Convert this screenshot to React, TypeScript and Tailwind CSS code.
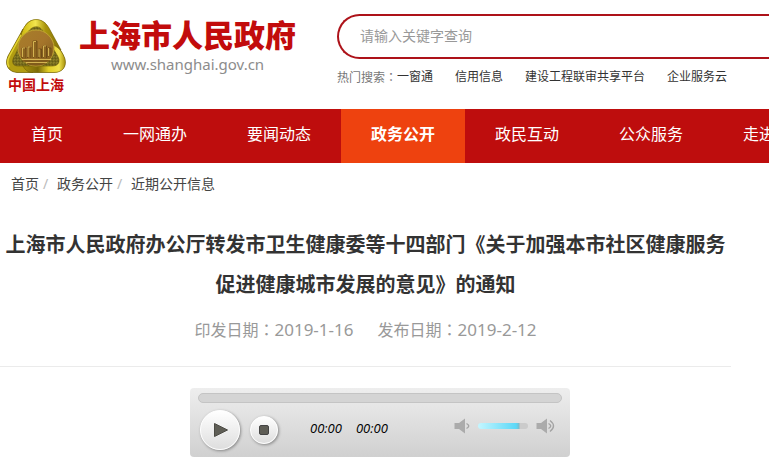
import { useState } from "react";

const navItems = [
  "首页",
  "一网通办",
  "要闻动态",
  "政务公开",
  "政民互动",
  "公众服务",
  "走进上海",
];

const hotSearches = ["一窗通", "信用信息", "建设工程联审共享平台", "企业服务云"];

const dates = [
  { label: "印发日期", value: "2019-1-16" },
  { label: "发布日期", value: "2019-2-12" },
];

const Emblem = () => (
  <svg viewBox="3 3 60 54" className="h-[54px] w-[60px]" aria-hidden="true">
    <defs>
      <linearGradient id="gold" x1="0" y1="0" x2="1" y2="0">
        <stop offset="0" stopColor="#9c8808" />
        <stop offset="0.3" stopColor="#d8c51c" />
        <stop offset="0.5" stopColor="#f2e54e" />
        <stop offset="0.7" stopColor="#a8930c" />
        <stop offset="1" stopColor="#84700a" />
      </linearGradient>
      <linearGradient id="goldBase" x1="0" y1="0" x2="1" y2="0">
        <stop offset="0" stopColor="#a8930e" />
        <stop offset="0.35" stopColor="#7d6a08" />
        <stop offset="0.6" stopColor="#e0cd26" />
        <stop offset="0.85" stopColor="#f0e14a" />
        <stop offset="1" stopColor="#a58f0c" />
      </linearGradient>
      <linearGradient id="bronze" x1="0" y1="0" x2="1" y2="1">
        <stop offset="0" stopColor="#a87e2a" />
        <stop offset="0.5" stopColor="#a5752b" />
        <stop offset="1" stopColor="#7f5c1c" />
      </linearGradient>
      <pattern id="grain" width="3" height="3" patternUnits="userSpaceOnUse">
        <rect width="3" height="3" fill="#756a1c" />
        <path d="M0 1H1M2 2H3" stroke="#a09436" strokeWidth="0.9" />
        <path d="M1 0V1" stroke="#4f480f" strokeWidth="0.9" />
      </pattern>
    </defs>
    <path
      d="M23 8C28 2 39 2 44 9L60 38C65 48 61 56 52 56.5H14C5 56 1 49 5 40Z"
      fill="#8d7a0c"
    />
    <path d="M22 16C28 5 39 6 43 14L56 35C60 45 57 51 48 52H18C8 52 6 46 9 39Z" fill="url(#grain)" />
    <path
      d="M16 23C20 10 26 3 34 3.5C39 4 43 7 46 12L58 34C55 31 52 30 49 30L40 15C35 7 27 11 23 19L7 44C8 36 12 31 16 23Z"
      fill="url(#gold)"
      stroke="#7b690a"
      strokeWidth="0.6"
    />
    <path
      d="M20 13L5 40C1 49 6 56 14 56.5H30C26 54 24 52 22 50H15C9 50 8 45 12 39L18 27C17 22 18 18 20 13Z"
      fill="#b29d12"
      stroke="#6c5b08"
      strokeWidth="0.6"
    />
    <path d="M18 19L7 39Q3 46 6 51" fill="none" stroke="#e3d332" strokeWidth="1.5" />
    <path
      d="M20 50H49C56 50 58 45 54 39L48 29C55 29 60 37 62 43C64 51 59 56.5 51 56.5H28C25 56 22 54 20 50Z"
      fill="url(#goldBase)"
      stroke="#6c5b08"
      strokeWidth="0.6"
    />
    <circle cx="33" cy="32" r="18" fill="url(#bronze)" stroke="#c0a431" strokeWidth="1" />
    <path d="M17 40A18 18 0 0 0 49 40L33 46Z" fill="#8e661f" />
    <path
      d="M19 42V32H23V42M24.5 42V31H28V42M30 42V25H34V42M35.5 42V33H38.5V42M40 42V30H43.5V42M45 41V32H48V40"
      fill="#8c6420"
      stroke="#604113"
      strokeWidth="0.7"
    />
    <path
      d="M19.5 41V32H22M25 41V31H27.5M30.5 41V25.5H33M36 41V33M40.5 41V30H43M45.5 40V32M19 43.5H48M23 46.5H44"
      fill="none"
      stroke="#dcbd58"
      strokeWidth="0.9"
    />
    <path d="M19 45H47M24 48H43" stroke="#6d4b15" strokeWidth="0.8" />
  </svg>
);

const Header = () => (
  <header className="flex h-[109px] items-start">
    <a href="#" className="flex w-[337px] shrink-0 pl-[5px] text-[#c20c0c]">
      <div className="flex w-[62px] flex-col items-center pt-[19px]">
        <Emblem />
        <span className="pt-0.5 text-sm leading-5 font-bold">中国上海</span>
      </div>
      <div className="flex flex-col items-center pt-[13px] pl-3">
        <span className="text-[31px] leading-[45px] font-black">上海市人民政府</span>
        <span className="text-[15px] leading-3 text-[#8c8c8c]">www.shanghai.gov.cn</span>
      </div>
    </a>
    <div className="min-w-0 flex-1 pt-3.5">
      <input
        type="search"
        aria-label="搜索"
        placeholder="请输入关键字查询"
        className="h-[45px] w-full rounded-l-full border-2 border-r-0 border-[#ad1219] pb-0.5 pl-[21px] text-sm outline-none placeholder:text-[#999]"
      />
      <div className="flex overflow-hidden pt-2 text-xs leading-5 whitespace-nowrap text-[#333]">
        <span className="text-[#777]">
          热门搜索<span className="font-['Noto_Sans_CJK_TC',sans-serif]">：</span>
        </span>
        <div className="flex gap-[22px]">
          {hotSearches.map((item) => (
            <a key={item} href="#">
              {item}
            </a>
          ))}
        </div>
      </div>
    </div>
  </header>
);

const MainNav = () => (
  <nav className="flex overflow-hidden bg-[#be0d0d] pl-px text-base leading-[50px] whitespace-nowrap text-white">
    {navItems.map((item) => (
      <a
        key={item}
        href="#"
        className={
          item === "政务公开"
            ? "bg-[#ee420f] px-[30px] pb-1 font-bold"
            : "px-[30px] pb-1"
        }
      >
        {item}
      </a>
    ))}
  </nav>
);

const Speaker = ({ loud }: { loud?: boolean }) => (
  <svg viewBox="0 0 20 16" className="h-4 w-5" fill="none" aria-hidden="true">
    <path d="M0.5 5H5L11 0.5V15.5L5 11H0.5Z" fill="#ababab" />
    <path d="M12.5 5.5Q17 8 12.5 10.5" stroke="#a3a3a3" strokeWidth="1.4" />
    {loud && <path d="M14 2.5Q21 8 14 13.5" stroke="#a3a3a3" strokeWidth="1.4" />}
  </svg>
);

const AudioPlayer = () => {
  const [volume, setVolume] = useState(83);

  return (
    <div className="mx-auto h-[69px] w-[380px] rounded bg-linear-to-b from-[#eee] to-[#d0d0d0] px-2 pt-[5px]">
      <input
        type="range"
        aria-label="播放进度"
        defaultValue={0}
        className="block h-2.5 w-full appearance-none rounded-full border border-[#c4c4c4] bg-[#d4d4d4] [&::-webkit-slider-thumb]:appearance-none [&::-webkit-slider-thumb]:opacity-0"
      />
      <div className="flex items-start pt-[7px] pl-0.5">
        <button
          aria-label="播放"
          className="flex size-10 items-center justify-center rounded-full border border-white bg-linear-to-b from-white to-[#dedede] shadow-[1px_1px_3px_#888]"
        >
          <svg viewBox="0 0 14 14" className="ml-0.5 size-3.5">
            <path d="M0.5 0.5L13.5 7L0.5 13.5Z" fill="#5f5e56" stroke="#4c4b44" />
          </svg>
        </button>
        <button
          aria-label="停止"
          className="mt-1.5 ml-2.5 flex size-7 items-center justify-center rounded-full border border-white bg-linear-to-b from-white to-[#dedede] shadow-[1px_1px_3px_#888]"
        >
          <span className="size-2.5 rounded-xs border border-[#444] bg-[#5f5e56]" />
        </button>
        <div className="mt-2 ml-8 flex flex-1 gap-3.5 font-['Open_Sans',sans-serif] text-[13px] leading-5 text-black italic">
          <span>00:00</span>
          <span>00:00</span>
        </div>
        <div className="mt-2 flex items-center gap-1 pr-1.5">
          <Speaker />
          <input
            type="range"
            aria-label="音量"
            value={volume}
            onChange={(e) => setVolume(Number(e.target.value))}
            className="h-1.5 w-[50px] appearance-none rounded-full bg-[#cbcbcb] [&::-webkit-slider-thumb]:appearance-none [&::-webkit-slider-thumb]:opacity-0"
            style={{
              backgroundImage: "linear-gradient(to right, #c4f6ff, #5cd8f7 92%, #7fb9c6)",
              backgroundSize: `${volume}% 100%`,
              backgroundRepeat: "no-repeat",
            }}
          />
          <span className="pl-1">
            <Speaker loud />
          </span>
        </div>
      </div>
    </div>
  );
};

const App = () => {
  return (
    <div className="bg-white font-['Noto_Sans','Noto_Sans_CJK_SC',sans-serif]">
      <Header />
      <MainNav />
      <div className="flex pt-2.5 pl-[11px] text-sm leading-[22px] text-[#444]">
        <a href="#">首页</a>
        <span className="w-[18px] pl-1 text-[#bbb]">/</span>
        <a href="#">政务公开</a>
        <span className="w-[18px] pl-1 text-[#bbb]">/</span>
        <a href="#">近期公开信息</a>
      </div>
      <main className="mr-[38px]">
        <div className="border-b border-[#ebebeb] pt-[30px] pb-6 text-center">
          <h1 className="text-xl leading-10 font-bold text-[#333]">
            上海市人民政府办公厅转发市卫生健康委等十四部门《关于加强本市社区健康服务
            <br />
            促进健康城市发展的意见》的通知
          </h1>
          <p className="flex justify-center gap-6 pt-3 text-base leading-6 text-[#999]">
            {dates.map((date) => (
              <span key={date.label}>
                {date.label}
                <span className="font-['Noto_Sans_CJK_TC',sans-serif]">：</span>
                <span className="text-[17px]">{date.value}</span>
              </span>
            ))}
          </p>
        </div>
        <div className="pt-[21px] pl-[29px]">
          <AudioPlayer />
        </div>
      </main>
    </div>
  );
};

export default App;
